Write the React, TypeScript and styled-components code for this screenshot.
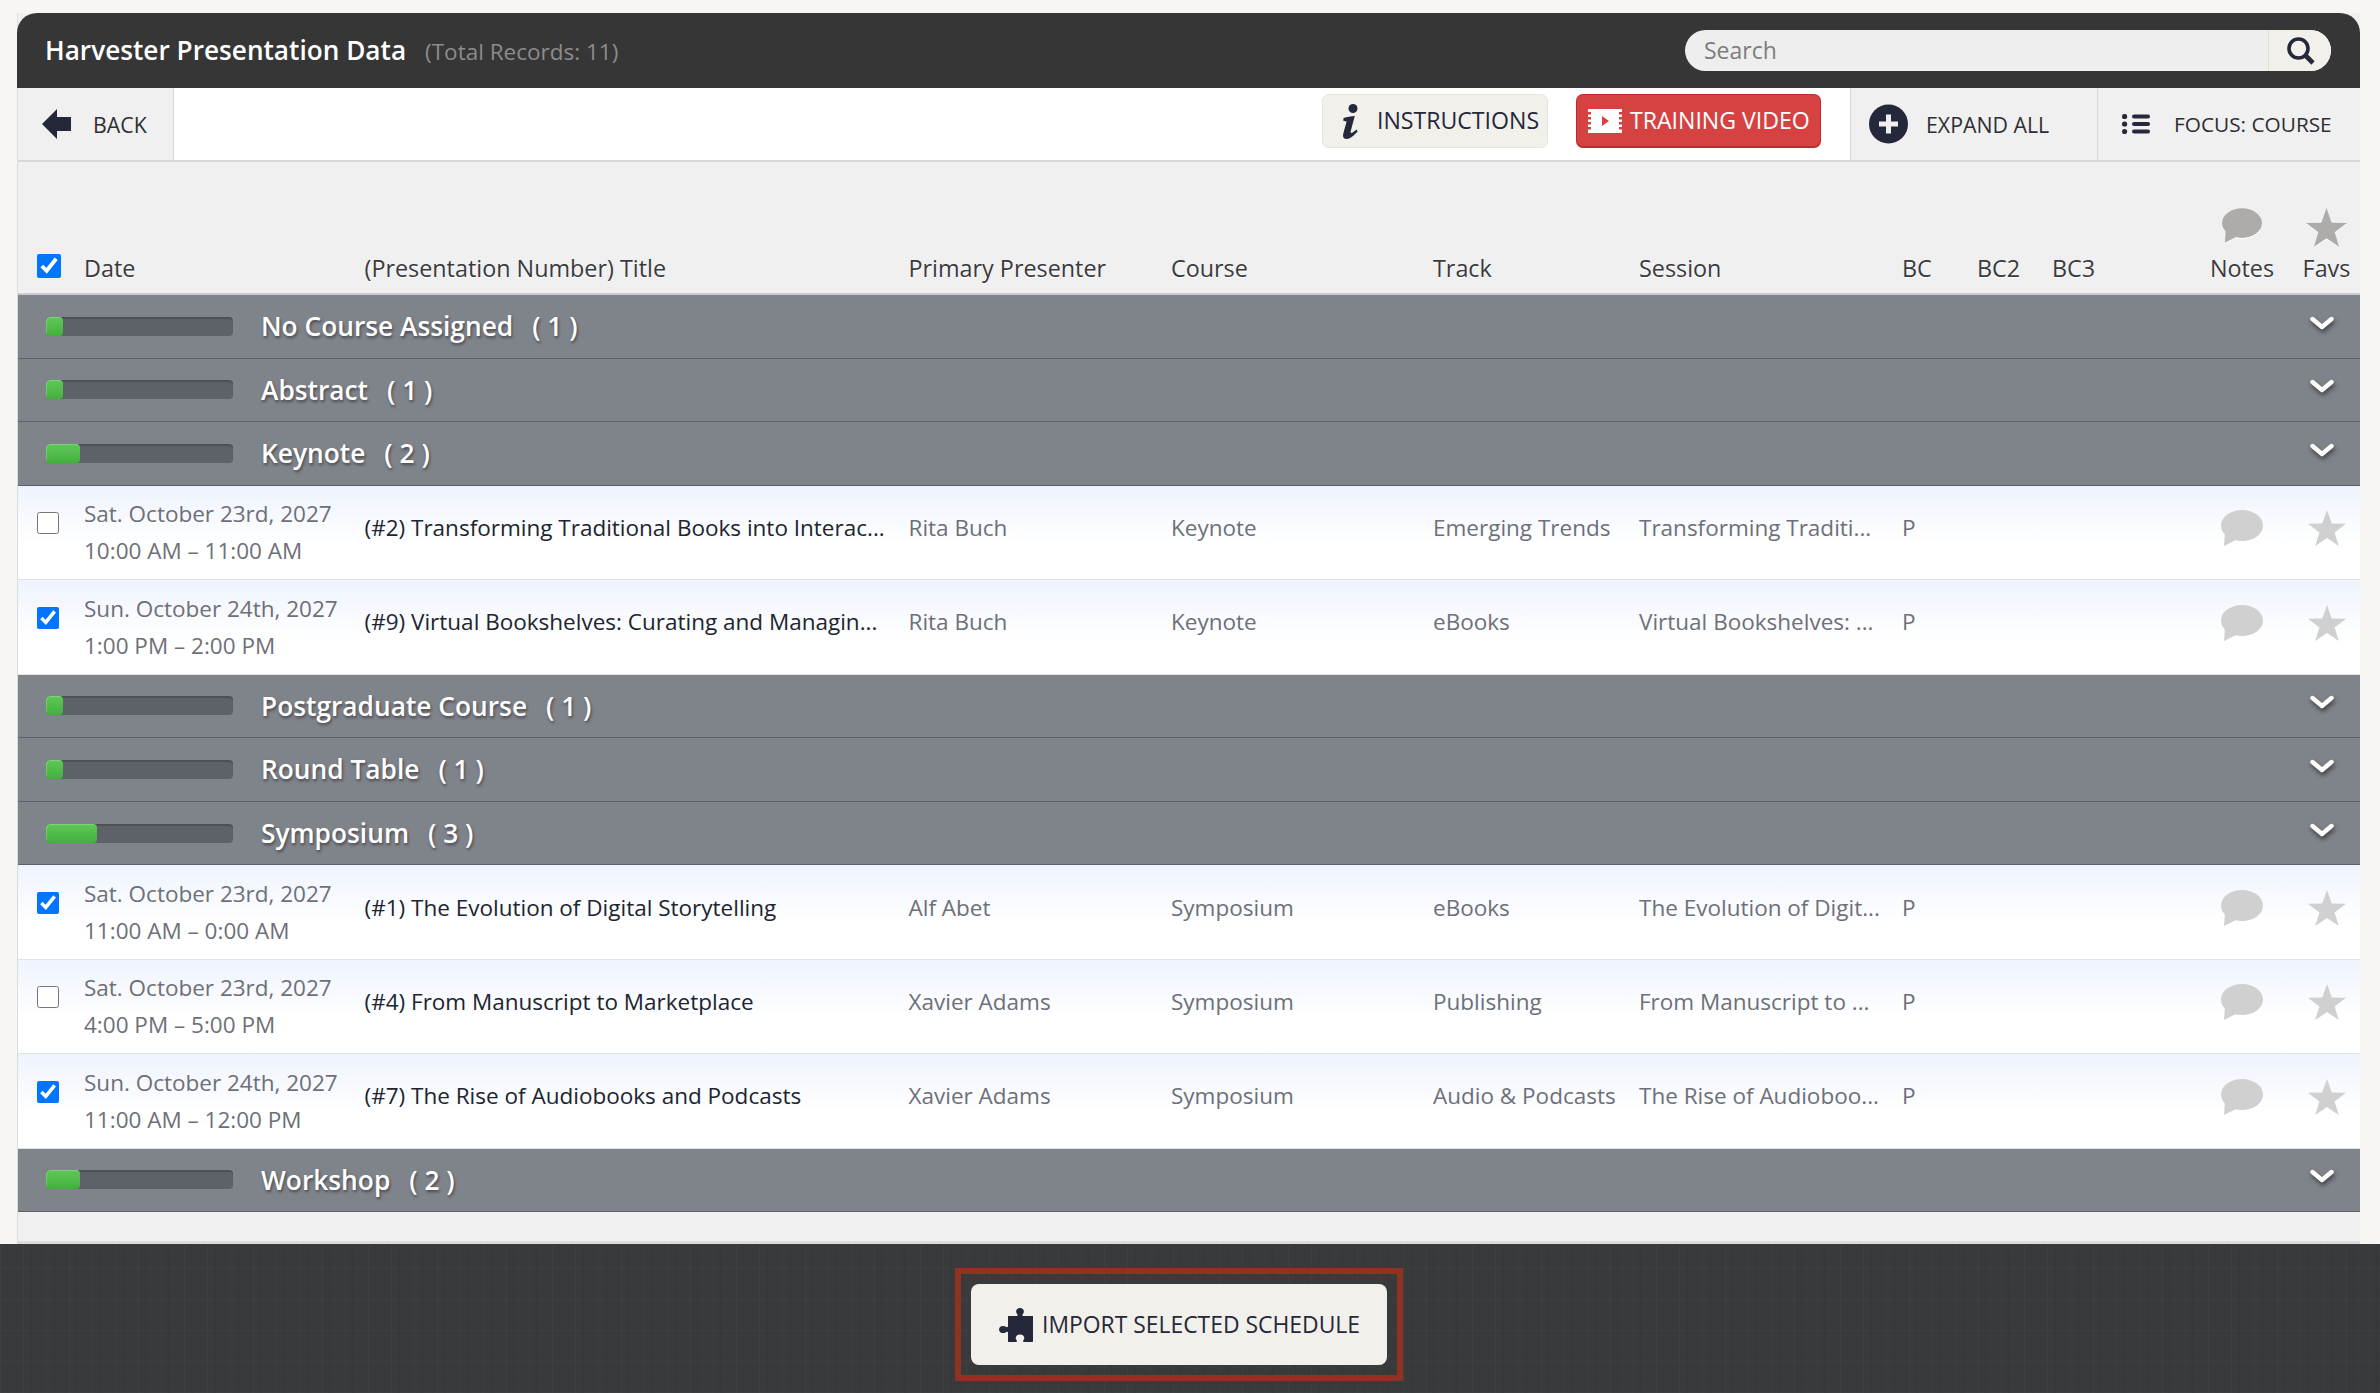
import React from "react";
import styled, { createGlobalStyle, css } from "styled-components";

const GlobalStyle = createGlobalStyle`
  * { box-sizing: border-box; }
  html, body { margin: 0; padding: 0; background: #f7f6f2; }
  body { font-family: "Open Sans", "Liberation Sans", sans-serif; }
`;

const ink = "#24283a";

const Page = styled.div`
  display: flex;
  flex-direction: column;
  height: 1393px;
  overflow: hidden;
`;

const Panel = styled.main`
  flex: 1;
  margin: 13px 20px 0 17px;
  background: #f0f0f0;
  border-left: 1px solid #dcdcdc;
  border-bottom: 3px solid #dcdcdc;
`;

const Header = styled.header`
  height: 75px;
  margin-left: -1px;
  padding: 0 29px 0 28px;
  background: #363636;
  border-radius: 20px 20px 0 0;
  display: flex;
  align-items: center;
  justify-content: space-between;
`;

const HeaderTitle = styled.h1`
  margin: -2px 0 0;
  font-size: 26.2px;
  font-weight: 600;
  color: #fff;
`;

const RecordCount = styled.span`
  margin-left: 19px;
  font-size: 22.5px;
  font-weight: 400;
  color: #8c8c8c;
`;

const SearchBox = styled.div`
  width: 646px;
  height: 41px;
  border-radius: 21px;
  background: #eeeeee;
  display: flex;
  overflow: hidden;
`;

const SearchInput = styled.input`
  flex: 1;
  min-width: 0;
  border: 0;
  outline: 0;
  padding: 0 19px 2px;
  background: transparent;
  font: 400 23px "Open Sans", sans-serif;
  &::placeholder { color: #7d7d7d; opacity: 1; }
`;

const SearchButton = styled.button`
  width: 63px;
  padding: 0 0 0 2px;
  border: 0;
  border-left: 1px solid #e0dfd8;
  background: #f2f0eb;
  display: flex;
  align-items: center;
  justify-content: center;
`;

const Toolbar = styled.nav`
  height: 74px;
  display: flex;
  background: #fff;
  border-bottom: 2px solid #d9d9d9;
`;

const ToolItem = styled.div<{ $width: number }>`
  width: ${(p) => p.$width}px;
  display: flex;
  align-items: center;
  background: #f0f0f0;
  font-size: 21.3px;
  color: #2e2e33;
`;

const BackItem = styled(ToolItem)`
  padding-left: 24px;
  gap: 22px;
  border-right: 1px solid #d9d9d9;
`;

const ExpandItem = styled(ToolItem)`
  padding-left: 18px;
  gap: 18px;
  border-left: 1px solid #d9d9d9;
`;

const FocusItem = styled(ToolItem)`
  padding-left: 24px;
  gap: 24px;
  font-size: 20.8px;
  border-left: 1px solid #d9d9d9;
`;

const Spacer = styled.div`
  flex: 1;
`;

const ToolActions = styled.div`
  display: flex;
  gap: 28px;
  padding: 6px 29px 0 0;
`;

const ActionButton = styled.button<{ $tone: "plain" | "red" }>`
  height: 54px;
  display: flex;
  align-items: center;
  border-radius: 7px;
  padding: 0;
  font: 400 23.1px "Open Sans", sans-serif;
  ${(p) =>
    p.$tone === "red"
      ? css`
          width: 245px;
          padding-left: 11px;
          gap: 8px;
          background: #d64242;
          border: 1px solid #bd2c2c;
          border-bottom-width: 2px;
          color: #fff;
        `
      : css`
          width: 226px;
          padding-left: 19px;
          gap: 18px;
          background: #f2f0eb;
          border: 1px solid #e6e4de;
          color: ${ink};
        `}
  span { position: relative; top: -1px; white-space: nowrap; }
`;

const gridColumns = css`
  display: grid;
  grid-template-columns: 66px 280.5px 544px 262.5px 262px 206px 263px 75px 75px 139px 102px 67px;
`;

const ColumnHeader = styled.div`
  ${gridColumns}
  height: 133px;
  align-items: end;
  border-bottom: 2px solid #c9cbce;
  font-size: 23.35px;
  color: #3a3a3e;
  text-shadow: 0 1px 0 #fff;
  padding-bottom: 9px;
`;

const HeaderLabel = styled.div`
  line-height: 31px;
  white-space: nowrap;
`;

const HeaderIconCell = styled.div<{ $gap: number }>`
  display: flex;
  flex-direction: column;
  align-items: center;
  gap: ${(p) => p.$gap}px;
  line-height: 31px;
  svg { filter: drop-shadow(0 1px 0 #fff); }
`;

const CheckCell = styled.div<{ $lift: number }>`
  padding-left: 19px;
  display: flex;
  align-items: center;
  transform: translateY(${(p) => -p.$lift}px);
`;

const Check = styled.input.attrs({ type: "checkbox" })<{ $size: number }>`
  margin: 0;
  width: ${(p) => p.$size}px;
  height: ${(p) => p.$size}px;
  accent-color: #0075ff;
`;

const GroupBar = styled.section`
  height: 63.6px;
  display: flex;
  align-items: center;
  padding: 0 26px 0 28px;
  background: #7f838a;
  border-bottom: 1px solid #5b616a;
`;

const Meter = styled.div`
  width: 187px;
  height: 19px;
  border-radius: 4px;
  background: #5d6168;
  box-shadow: inset 0 2px 1px rgba(0, 0, 0, 0.18);
  overflow: hidden;
  margin-right: 28px;
`;

const MeterFill = styled.div`
  height: 100%;
  border-radius: 4px;
  background: linear-gradient(#5ec857, #43b03c);
  box-shadow: inset 1px 1px 0 rgba(255, 255, 255, 0.2);
`;

const GroupTitle = styled.h2`
  flex: 1;
  margin: 0;
  font-size: 26.3px;
  font-weight: 600;
  color: #fff;
  text-shadow: 1px 2px 3px rgba(0, 0, 0, 0.45);
`;

const GroupCount = styled.span`
  margin-left: 19px;
`;

const Chevron = styled.svg`
  margin-top: -7px;
  filter: drop-shadow(1px 3px 2px rgba(0, 0, 0, 0.5));
`;

const Row = styled.div`
  ${gridColumns}
  height: 94.4px;
  align-items: center;
  background: linear-gradient(#eef3fd, #ffffff 62%);
  border-bottom: 1px solid #e2e3e5;
  font-size: 22.5px;
  color: #6d7078;
`;

const DateCell = styled.div`
  line-height: 37px;
  white-space: nowrap;
`;

const Cell = styled.div<{ $strong?: boolean }>`
  padding-bottom: 10px;
  white-space: nowrap;
  color: ${(p) => (p.$strong ? "#20242e" : "inherit")};
`;

const RowIcon = styled.div`
  padding-bottom: 8px;
  display: flex;
  justify-content: center;
`;

const Footer = styled.footer`
  height: 149px;
  display: flex;
  align-items: flex-start;
  justify-content: center;
  padding-top: 24px;
  background-color: #393a3c;
  background-image:
    repeating-linear-gradient(90deg, rgba(255, 255, 255, 0.022) 0 1px, transparent 1px 7px, rgba(0, 0, 0, 0.04) 7px 9px, transparent 9px 23px),
    repeating-linear-gradient(0deg, rgba(255, 255, 255, 0.02) 0 1px, transparent 1px 9px, rgba(0, 0, 0, 0.04) 9px 10px, transparent 10px 31px);
`;

const ImportFrame = styled.div`
  width: 448px;
  height: 113px;
  margin-right: 22px;
  border: 6px solid #8f3320;
  display: flex;
  align-items: center;
  justify-content: center;
`;

const ImportButton = styled.button`
  width: 416px;
  height: 81px;
  border: 0;
  border-radius: 8px;
  background: #f2f0eb;
  color: ${ink};
  font: 400 22.9px "Open Sans", sans-serif;
  display: flex;
  align-items: center;
  padding-left: 28px;
  gap: 9px;
  white-space: nowrap;
`;

const Bubble = ({ w, h, fill }: { w: number; h: number; fill: string }) => (
  <svg width={w} height={h} viewBox="0 0 42 36" aria-hidden="true">
    <ellipse cx="21" cy="15.5" rx="21" ry="15.5" fill={fill} />
    <path d="M4 22 L3 36 L17 29 Z" fill={fill} />
  </svg>
);

const Star = ({ size, fill }: { size: number; fill: string }) => (
  <svg width={size} height={size} viewBox="0 0 40 38" aria-hidden="true">
    <path d="M20 0 L25 14.3 L40 14.6 L28 23.7 L32.4 38 L20 29.5 L7.6 38 L12 23.7 L0 14.6 L15 14.3 Z" fill={fill} />
  </svg>
);

const BackArrow = () => (
  <svg width="29" height="30" viewBox="0 0 29 30" aria-hidden="true">
    <path d="M0 15 L15 0 L15 8 L29 8 L29 22 L15 22 L15 30 Z" fill={ink} />
  </svg>
);

const InfoIcon = () => (
  <svg width="17" height="35" viewBox="0 0 17 35" aria-hidden="true">
    <circle cx="11" cy="4.5" r="4.5" fill={ink} />
    <path
      d="M1.5 14 C5 13 9.5 12 12.8 12 L8.6 27.5 C8.3 29 9.5 29.3 11 28.3 L14.8 25.5 L15.6 27.5 C12 31.5 8 35 4.4 35 C1.2 35 0.6 32 1.3 29.5 L4.6 17.5 L1.3 16.8 Z"
      fill={ink}
    />
  </svg>
);

const FilmIcon = () => (
  <svg width="34" height="24" viewBox="0 0 34 24" aria-hidden="true">
    <rect width="34" height="24" fill="#fff" />
    {[3, 8, 13, 18].map((y) => (
      <React.Fragment key={y}>
        <rect x="0" y={y} width="3" height="2.5" fill="#d64242" />
        <rect x="31" y={y} width="3" height="2.5" fill="#d64242" />
      </React.Fragment>
    ))}
    <path d="M14 7 L21 12 L14 17 Z" fill="#d64242" />
  </svg>
);

const PlusIcon = () => (
  <svg width="39" height="40" viewBox="0 0 39 40" aria-hidden="true">
    <circle cx="19.5" cy="20" r="19.5" fill={ink} />
    <path d="M19.5 10.5 V29.5 M10 20 H29" stroke="#f0f0f0" strokeWidth="5" />
  </svg>
);

const ListIcon = () => (
  <svg width="28" height="20" viewBox="0 0 28 20" aria-hidden="true">
    {[2.5, 10, 17.5].map((y) => (
      <React.Fragment key={y}>
        <circle cx="2.6" cy={y} r="2.6" fill={ink} />
        <rect x="10" y={y - 2.1} width="18" height="4.2" rx="2" fill={ink} />
      </React.Fragment>
    ))}
  </svg>
);

const SearchIcon = () => (
  <svg width="28" height="28" viewBox="0 0 28 28" aria-hidden="true">
    <circle cx="11.5" cy="11.5" r="9.5" fill="none" stroke={ink} strokeWidth="3.6" />
    <path d="M18.5 18.5 L26 26" stroke={ink} strokeWidth="4.6" />
  </svg>
);

const PuzzleIcon = () => (
  <svg width="34" height="34" viewBox="0 0 34 34" aria-hidden="true">
    <path
      d="M9 8 L17 8 C19 8 19 6.5 17.8 5.5 C16.4 4 17 0 21 0 C25 0 25.6 4 24.2 5.5 C23 6.5 23 8 25 8 L34 8 L34 33 C34 33.6 33.6 34 33 34 L25 34 C23.6 34 24 32.6 24.8 31.6 C26.2 29.6 24.6 26.6 21 26.6 C17.4 26.6 15.8 29.6 17.2 31.6 C18 32.6 18.4 34 17 34 L9.5 34 C9.2 34 9 33.8 9 33.5 L9 25 C9 23.5 7.5 23.6 6.5 24.4 C4.5 25.8 0 25.2 0 21.5 C0 17.8 4.5 17.2 6.5 18.6 C7.5 19.4 9 19.5 9 18 Z"
      fill={ink}
    />
  </svg>
);

type Item = {
  checked: boolean;
  day: string;
  time: string;
  title: string;
  presenter: string;
  course: string;
  track: string;
  session: string;
};

type Group = { name: string; count: number; items: Item[] };

const groups: Group[] = [
  { name: "No Course Assigned", count: 1, items: [] },
  { name: "Abstract", count: 1, items: [] },
  {
    name: "Keynote",
    count: 2,
    items: [
      {
        checked: false,
        day: "Sat. October 23rd, 2027",
        time: "10:00 AM – 11:00 AM",
        title: "(#2) Transforming Traditional Books into Interac...",
        presenter: "Rita Buch",
        course: "Keynote",
        track: "Emerging Trends",
        session: "Transforming Traditi...",
      },
      {
        checked: true,
        day: "Sun. October 24th, 2027",
        time: "1:00 PM – 2:00 PM",
        title: "(#9) Virtual Bookshelves: Curating and Managin...",
        presenter: "Rita Buch",
        course: "Keynote",
        track: "eBooks",
        session: "Virtual Bookshelves: ...",
      },
    ],
  },
  { name: "Postgraduate Course", count: 1, items: [] },
  { name: "Round Table", count: 1, items: [] },
  {
    name: "Symposium",
    count: 3,
    items: [
      {
        checked: true,
        day: "Sat. October 23rd, 2027",
        time: "11:00 AM – 0:00 AM",
        title: "(#1) The Evolution of Digital Storytelling",
        presenter: "Alf Abet",
        course: "Symposium",
        track: "eBooks",
        session: "The Evolution of Digit...",
      },
      {
        checked: false,
        day: "Sat. October 23rd, 2027",
        time: "4:00 PM – 5:00 PM",
        title: "(#4) From Manuscript to Marketplace",
        presenter: "Xavier Adams",
        course: "Symposium",
        track: "Publishing",
        session: "From Manuscript to ...",
      },
      {
        checked: true,
        day: "Sun. October 24th, 2027",
        time: "11:00 AM – 12:00 PM",
        title: "(#7) The Rise of Audiobooks and Podcasts",
        presenter: "Xavier Adams",
        course: "Symposium",
        track: "Audio & Podcasts",
        session: "The Rise of Audioboo...",
      },
    ],
  },
  { name: "Workshop", count: 2, items: [] },
];

export default function App() {
  return (
    <Page>
      <GlobalStyle />
      <Panel>
        <Header>
          <HeaderTitle>
            Harvester Presentation Data
            <RecordCount>(Total Records: 11)</RecordCount>
          </HeaderTitle>
          <SearchBox>
            <SearchInput placeholder="Search" />
            <SearchButton>
              <SearchIcon />
            </SearchButton>
          </SearchBox>
        </Header>

        <Toolbar>
          <BackItem $width={156}>
            <BackArrow />
            BACK
          </BackItem>
          <Spacer />
          <ToolActions>
            <ActionButton $tone="plain">
              <InfoIcon />
              <span>INSTRUCTIONS</span>
            </ActionButton>
            <ActionButton $tone="red">
              <FilmIcon />
              <span>TRAINING VIDEO</span>
            </ActionButton>
          </ToolActions>
          <ExpandItem $width={247}>
            <PlusIcon />
            EXPAND ALL
          </ExpandItem>
          <FocusItem $width={263}>
            <ListIcon />
            FOCUS: COURSE
          </FocusItem>
        </Toolbar>

        <ColumnHeader>
          <CheckCell $lift={6}>
            <Check $size={24} defaultChecked />
          </CheckCell>
          <HeaderLabel>Date</HeaderLabel>
          <HeaderLabel>(Presentation Number) Title</HeaderLabel>
          <HeaderLabel>Primary Presenter</HeaderLabel>
          <HeaderLabel>Course</HeaderLabel>
          <HeaderLabel>Track</HeaderLabel>
          <HeaderLabel>Session</HeaderLabel>
          <HeaderLabel>BC</HeaderLabel>
          <HeaderLabel>BC2</HeaderLabel>
          <HeaderLabel>BC3</HeaderLabel>
          <HeaderIconCell $gap={10}>
            <Bubble w={40} h={35} fill="#aeabab" />
            Notes
          </HeaderIconCell>
          <HeaderIconCell $gap={5}>
            <Star size={41} fill="#aeabab" />
            Favs
          </HeaderIconCell>
        </ColumnHeader>

        {groups.map((group) => (
          <React.Fragment key={group.name}>
            <GroupBar>
              <Meter>
                <MeterFill style={{ width: `${group.count * 17}px` }} />
              </Meter>
              <GroupTitle>
                {group.name}
                <GroupCount>( {group.count} )</GroupCount>
              </GroupTitle>
              <Chevron width="24" height="14" viewBox="0 0 24 14" aria-hidden="true">
                <path d="M2.5 3 L12 11 L21.5 3" fill="none" stroke="#fff" strokeWidth="4.4" strokeLinecap="round" strokeLinejoin="round" />
              </Chevron>
            </GroupBar>
            {group.items.map((item) => (
              <Row key={item.title}>
                <CheckCell $lift={9}>
                  <Check $size={22} defaultChecked={item.checked} />
                </CheckCell>
                <DateCell>
                  {item.day}
                  <br />
                  {item.time}
                </DateCell>
                <Cell $strong>{item.title}</Cell>
                <Cell>{item.presenter}</Cell>
                <Cell>{item.course}</Cell>
                <Cell>{item.track}</Cell>
                <Cell>{item.session}</Cell>
                <Cell>P</Cell>
                <Cell />
                <Cell />
                <RowIcon>
                  <Bubble w={42} h={36} fill="#d0d0d0" />
                </RowIcon>
                <RowIcon>
                  <Star size={38} fill="#d0d0d0" />
                </RowIcon>
              </Row>
            ))}
          </React.Fragment>
        ))}
      </Panel>

      <Footer>
        <ImportFrame>
          <ImportButton>
            <PuzzleIcon />
            IMPORT SELECTED SCHEDULE
          </ImportButton>
        </ImportFrame>
      </Footer>
    </Page>
  );
}
